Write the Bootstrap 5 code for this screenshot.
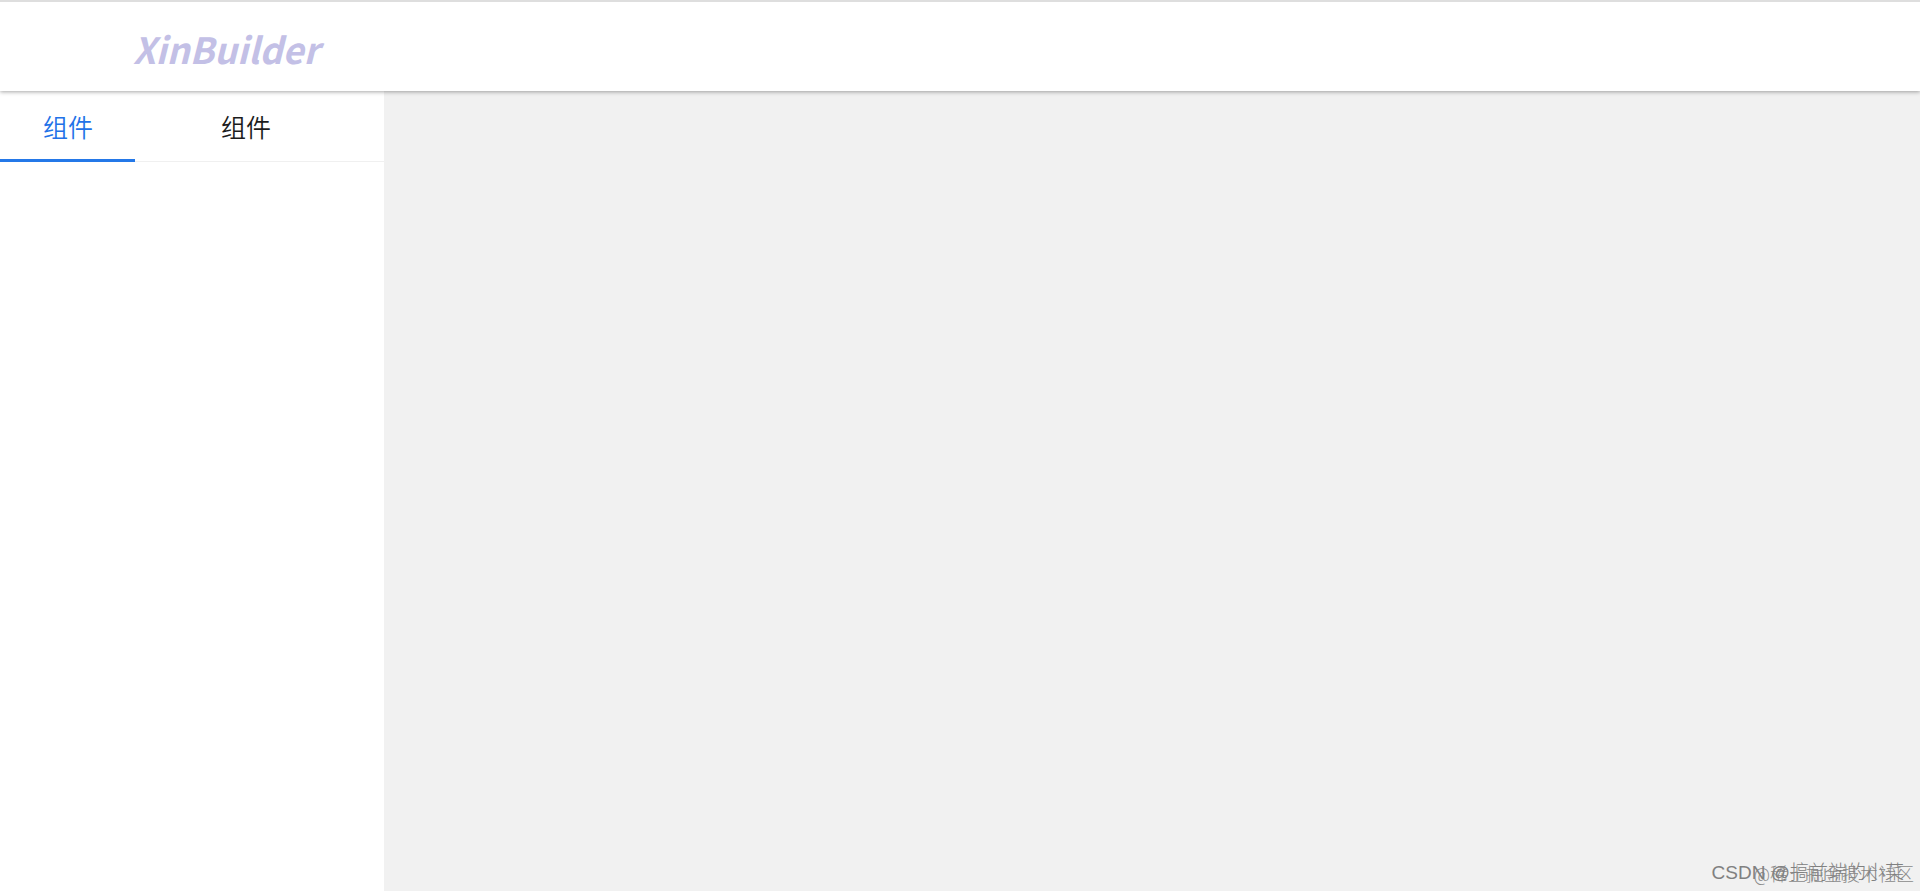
<!DOCTYPE html>
<html lang="zh-CN">
<head>
<meta charset="utf-8">
<meta name="viewport" content="width=device-width, initial-scale=1">
<title>XinBuilder</title>
<link href="https://cdn.jsdelivr.net/npm/bootstrap@5.3.0/dist/css/bootstrap.min.css" rel="stylesheet">
<style>
  body { font-family: "Noto Sans", "Noto Sans CJK SC", sans-serif; background: #fff; }
  .top-bar { height: 91px; padding: 2px 0 0 133px; border-top: 2px solid #dedede; box-shadow: 0 1px 4px rgba(0, 0, 0, .35); z-index: 2; }
  .logo-link { font: italic 700 36px/56px "Noto Sans CJK SC", sans-serif; color: #c3c0e6; }
  .side-panel { width: 20%; }
  .side-tabs { border-bottom: 1px solid #f0f0f0; height: 71px; }
  .side-tabs .tab-btn { font: 350 25px/36px "Noto Sans CJK SC", sans-serif; color: #1c1c1c; background: none; border: 0; border-bottom: 3px solid transparent; padding: 1px 42px 0 43px; margin: 0 43px -1px 0; }
  .side-tabs .tab-btn.active { color: #2272e8; border-bottom-color: #2478e8; }
  .stage { background: #f1f1f1; }
  .watermark { font: 300 18px/28px Roboto, "Noto Sans CJK SC", sans-serif; }
  .mark-author { right: 16px; bottom: 4px; font-family: "Liberation Sans", "Noto Sans CJK SC", sans-serif; font-size: 19px; color: #808080; }
  .mark-site { right: 6px; bottom: 2px; color: #8b8b8b; }
</style>
</head>
<body class="d-flex flex-column vh-100 overflow-hidden">
  <header class="top-bar bg-white position-relative d-flex align-items-center flex-shrink-0">
    <a class="logo-link text-decoration-none" href="#">XinBuilder</a>
  </header>
  <div class="d-flex flex-grow-1">
    <aside class="side-panel bg-white flex-shrink-0">
      <div class="side-tabs d-flex" role="tablist">
        <button class="tab-btn active" type="button" role="tab" aria-selected="true">组件</button>
        <button class="tab-btn" type="button" role="tab" aria-selected="false">组件</button>
      </div>
    </aside>
    <main class="stage flex-grow-1 position-relative">
      <span class="watermark mark-site position-absolute text-nowrap">@稀土掘金技术社区</span>
      <span class="watermark mark-author position-absolute text-nowrap">CSDN @搞前端的小菜</span>
    </main>
  </div>
  <script src="https://cdn.jsdelivr.net/npm/bootstrap@5.3.0/dist/js/bootstrap.bundle.min.js"></script>
</body>
</html>
